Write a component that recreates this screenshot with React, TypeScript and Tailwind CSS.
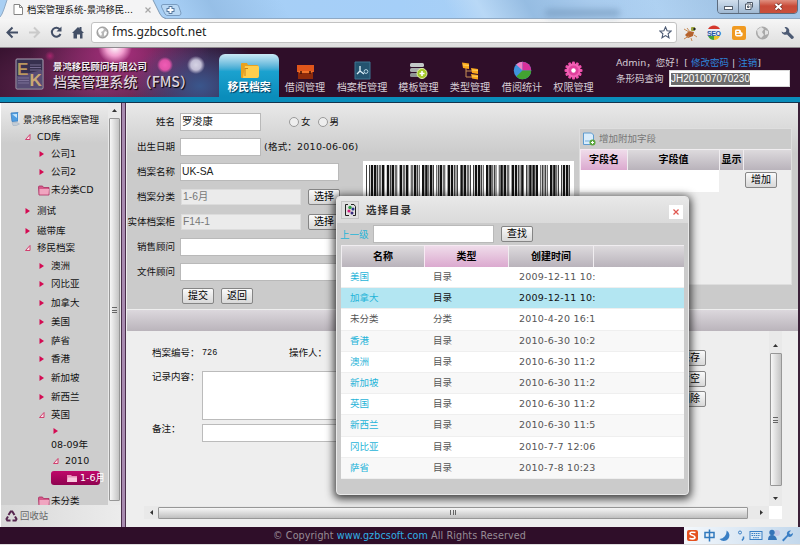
import React from "react";

const CODE39: Record<string, string> = {
  "0": "nnnwwnwnn",
  "1": "wnnwnnnnw",
  "2": "nnwwnnnnw",
  "3": "wnwwnnnnn",
  "7": "nnnwnnwnw",
  J: "nnnnwwwnn",
  H: "wnnnnwwnn",
  "*": "nwnnwnwnn",
};

function Barcode({ value }: { value: string }) {
  const bars: { x: number; w: number }[] = [];
  let x = 0;
  for (const ch of `*${value}*`) {
    CODE39[ch].split("").forEach((k, i) => {
      const w = k === "w" ? 3 : 1;
      if (i % 2 === 0) bars.push({ x, w });
      x += w;
    });
    x += 1;
  }
  return (
    <svg className="block h-[60px] w-[204px]" viewBox={`0 0 ${x - 1} 60`} preserveAspectRatio="none">
      {bars.map((b) => (
        <rect key={b.x} x={b.x} y="0" width={b.w} height="60" fill="#111" />
      ))}
    </svg>
  );
}

function Button({ children, className = "" }: { children: React.ReactNode; className?: string }) {
  return (
    <button
      className={`flex h-[16px] w-[32px] shrink-0 items-center justify-center whitespace-nowrap rounded-[2px] border border-[#858585] bg-linear-to-b from-[#fafafa] to-[#d8d8d8] text-[10px] leading-none text-black ${className}`}
    >
      {children}
    </button>
  );
}

/* ---------- browser chrome ---------- */

function TabStrip() {
  return (
    <div className="relative h-[19px] shrink-0 bg-linear-to-r from-[#a9cff3] via-[#a5cff8] to-[#b4d2ee]">
      <div className="absolute inset-0 bg-[linear-gradient(60deg,transparent_22%,#8fb8e0_27%,transparent_36%,transparent_56%,#c0dcf6_60%,#8db4da_66%,#a6c8ea_74%,transparent_82%,#9bbfe2_90%)] opacity-70" />
      <div className="absolute left-[545px] top-[9px] h-[8px] w-[75px] rounded bg-[#7397bb] opacity-60 blur-[3px]" />
      <div className="absolute bottom-0 left-0 h-px w-full bg-[#8fa9c4]" />
      <svg className="absolute left-0 top-0" width="184" height="19" viewBox="0 0 184 19">
        <path d="M0 19 L0 17 Q2 15 4 9 L7 0 L153 0 L160 14 Q162 18 166 19 Z" fill="#f4f4f5" />
        <path d="M153 0 L160 14 Q162 18 166 18.5" fill="none" stroke="#7f9ab5" />
        <path d="M0 17 Q2 15 4 9 L7 0" fill="none" stroke="#8fa9c4" />
        <path d="M163 4.5 H176 Q178 4.5 178.600 6 L181 13 Q181 15.500 179 15.500 H168 Q166 15.500 165 14 L161.500 7 Q161 4.500 163 4.500Z" fill="#b9d8f4" stroke="#7a9cc0" />
        <path d="M170.500 6v8M166.500 10h8" stroke="#56789f" strokeWidth="3.800" />
        <path d="M170.500 7v6M167.500 10h6" stroke="#fff" strokeWidth="2" />
        <path d="M14 4.500h5.500l3 3v7H14Z M19.500 4.500v3h3" fill="#fff" stroke="#858585" />
        <path d="M145.500 7.500l5 5M150.500 7.500l-5 5" stroke="#a7a7a7" strokeWidth="1.200" />
      </svg>
      <span className="absolute left-[27px] top-[4px] whitespace-nowrap text-[9.400px] leading-[12px] text-[#111]">
        档案管理系统-景鸿移民...
      </span>
      <div className="absolute right-[2px] top-[-2px] flex h-[16px] w-[81px] overflow-hidden rounded-b-[4px] border border-[#5c6b7d]">
        <div className="flex w-[21px] items-center justify-center border-r border-[#6d7f93] bg-linear-to-b from-[#d5e2ef] to-[#9fb8d2]">
          <div className="mt-[3px] h-[4px] w-[9px] border border-[#56606d] bg-white" />
        </div>
        <div className="flex w-[21px] items-center justify-center border-r border-[#6d7f93] bg-linear-to-b from-[#d5e2ef] to-[#9fb8d2]">
          <svg width="10" height="10" viewBox="0 0 10 10">
            <path d="M3 1.500h5.500v5M1.500 3h5.500v5.500h-5.500ZM3.500 5h1.500v1.500h-1.500Z" fill="#fff" stroke="#4e5a68" />
          </svg>
        </div>
        <div className="flex flex-1 items-center justify-center bg-linear-to-b from-[#e29a8c] via-[#c84a38] to-[#c9503c]">
          <svg width="9" height="9" viewBox="0 0 9 9">
            <path d="M1.500 2l6 5.500M7.500 2l-6 5.500" stroke="#65241d" strokeWidth="3.200" />
            <path d="M1.500 2l6 5.500M7.500 2l-6 5.500" stroke="#fff" strokeWidth="2" />
          </svg>
        </div>
      </div>
    </div>
  );
}

function Toolbar() {
  return (
    <div className="flex h-[29px] shrink-0 items-start border-b border-[#8e8a8e] bg-linear-to-b from-[#f6f6f6] to-[#dedede] pt-[3px]">
      <svg className="shrink-0" width="91" height="21" viewBox="0 0 91 21">
        <path d="M18 10.500H8M12.500 5.500l-5 5 5 5" fill="none" stroke="#434f66" strokeWidth="2" />
        <path d="M29 10.500h9M34 5.500l5 5-5 5" fill="none" stroke="#cacaca" strokeWidth="2" />
        <path d="M60 7.500A4.500 4.500 0 1 0 60.500 12" fill="none" stroke="#434f66" strokeWidth="2" />
        <path d="M61.500 4.500v5h-5Z" fill="#434f66" />
        <path d="M72 11L78 5l1.500 1.500V5h2v3.500L84 11h-1.500v5.500H80v-4h-3v4h-3.500V11Z" fill="#434f66" />
      </svg>
      <div className="flex h-[21px] w-[586px] shrink-0 items-center rounded-[3px] border border-[#c2c2c2] bg-white px-[4px]">
        <svg width="13" height="13" viewBox="0 0 13 13">
          <circle cx="6.500" cy="6.500" r="5.500" fill="#b9b9b9" stroke="#909090" />
          <path d="M3 3l3-1 2 1-1 2-2 1 1 2-1 2-2-2-1-3ZM9 5l2 1-1 3-2 1V7Z" fill="#fff" />
        </svg>
        <span className="ml-[3px] whitespace-nowrap font-['Noto_Sans'] text-[12.100px] leading-none text-[#222]">fms.gzbcsoft.net</span>
        <svg className="ml-auto" width="13" height="13" viewBox="0 0 13 13">
          <path d="M6.500 1l1.600 3.800 4 .300-3 2.700.9 4-3.500-2.200L3 11.800l.9-4-3-2.700 4-.300Z" fill="#fff" stroke="#4c5a73" strokeWidth="1.100" />
        </svg>
      </div>
      <svg className="shrink-0" width="120" height="21" viewBox="677 0 120 21">
        <path d="M685 13l4-4 5 1-1 4-5 2Z" fill="#b5622d" />
        <path d="M684 7l5 3M684 17l5-3M691 16l1 3M687 6l3 4M694 13l3 2" stroke="#c98b55" />
        <path d="M691 7h4M693 5v4" stroke="#9ba43c" strokeWidth="3" />
        <circle cx="694.500" cy="7" r="1.200" fill="#222" />
        <circle cx="714" cy="11" r="7" fill="#e9edf3" />
        <path d="M708 7a7 7 0 0 1 12 0Z" fill="#d5382d" />
        <path d="M708 14a7 7 0 0 0 6 4V14Z" fill="#40a23e" />
        <path d="M714 14h6a7 7 0 0 1-6 4Z" fill="#ebc22c" />
        <text x="707" y="13.500" fontSize="7" fontWeight="bold" fill="#2557a8" fontFamily="Liberation Sans, sans-serif" textLength="14">SEO</text>
        <rect x="732" y="4" width="14" height="14" rx="2" fill="#f09a21" />
        <path d="M736 7.500h3q2 0 2 2 0 1 1 1 .7 0 .7 1v1q0 2-2 2H737q-2 0-2-2v-3q0-2 1-2Z" fill="#fff" />
        <path d="M737 9.700h1.500M737 12.400h3" stroke="#f09a21" strokeWidth="1.200" strokeLinecap="round" />
        <circle cx="762.500" cy="11" r="6.500" fill="#a9a9a9" />
        <path d="M757 8l4-3 3 2-2 3 2 3-3 3-3-3ZM765 8l3 1v3l-3 1Z" fill="#e3e3e3" />
        <path d="M781.500 9.500a4 4 0 0 0 5.500 3l4.500 4.500q1.800.5 2.500-2l-4.800-4.800a4 4 0 0 0-4.700-5l2 2.500-.8 2.200-2.200.6Z" fill="#4c5a73" />
      </svg>
    </div>
  );
}

/* ---------- application header ---------- */

const navIcons: Record<string, React.ReactNode> = {
  folder: (
    <>
      <path d="M1 3q0-1 1-1h5l1 2h9q1 0 1 1v11q0 1-1 1H2q-1 0-1-1Z" fill="#e8a21f" />
      <path d="M5 5h13q1 0 1 1v9q0 2-2 2H3Z" fill="#ffce4d" />
      <path d="M5 7v8M5 7.500h3" stroke="#c98316" fill="none" />
    </>
  ),
  case: (
    <>
      <path d="M1 4h17v7H1Z" fill="#e0561b" />
      <path d="M2 10h15v8H2Z" fill="#8d2a0b" />
      <path d="M1 10h17l-3 2H4Z" fill="#f0742c" />
      <path d="M5 10v3M14 10v3" stroke="#401004" strokeWidth="1.500" />
    </>
  ),
  cabinet: (
    <>
      <path d="M2 1h15v17H2Z" fill="#24536f" stroke="#3c7491" />
      <path d="M7 5v6M7 10l-3 3M7 10l4 3" stroke="#d9edf6" strokeWidth="1.400" fill="none" />
      <circle cx="13" cy="10.500" r="1.900" fill="none" stroke="#b9d6e4" />
    </>
  ),
  server: (
    <>
      <rect x="1" y="2" width="14" height="4" rx="1.500" fill="#c3c8c8" />
      <rect x="1" y="7" width="14" height="4" rx="1.500" fill="#a8adad" />
      <rect x="1" y="12" width="14" height="4" rx="1.500" fill="#8f9494" />
      <circle cx="13" cy="12.500" r="5" fill="#a4c928" stroke="#e0efa6" />
      <path d="M13 10v5M10.500 12.500h5" stroke="#fff" strokeWidth="1.600" />
    </>
  ),
  tree: (
    <>
      <path d="M5 7v9h6M5 10h6" stroke="#c98f54" fill="none" />
      <path d="M1 1.500l7 1v5.500l-6-1Z" fill="#f9a71c" />
      <path d="M10 7l7 1v5l-6-1ZM10 13l7 1v4.500l-6-1Z" fill="#f9a71c" />
      <path d="M2 4l6 .5M11 9l6 .5M11 15l6 .5" stroke="#ffd35f" />
    </>
  ),
  pie: (
    <>
      <circle cx="9.500" cy="9.500" r="8.700" fill="#3f94dd" />
      <path d="M9.500 9.500L3.200 3.500A8.700 8.700 0 0 1 9.500 .8Z" fill="#f080c4" />
      <path d="M9.500 9.500V.8A8.700 8.700 0 0 1 18.200 9.500Z" fill="#d9309a" />
      <path d="M9.500 9.500H18.200A8.700 8.700 0 0 1 3.300 15.600Z" fill="#42a332" />
    </>
  ),
  gear: (
    <>
      {[0, 30, 60, 90, 120, 150].map((a) => (
        <rect key={a} x="8" y="0.500" width="3" height="18" rx="1" fill="#ef4fab" transform={`rotate(${a} 9.500 9.500)`} />
      ))}
      <circle cx="9.500" cy="9.500" r="7" fill="#f264b6" />
      <circle cx="9.500" cy="9.500" r="5" fill="#e0409d" />
      <circle cx="9.500" cy="9.500" r="2.200" fill="#fff" />
    </>
  ),
};

const nav = [
  { label: "移民档案", icon: "folder", width: "w-[60px]", active: true },
  { label: "借阅管理", icon: "case", width: "w-[52px]" },
  { label: "档案柜管理", icon: "cabinet", width: "w-[62px]" },
  { label: "模板管理", icon: "server", width: "w-[51px]" },
  { label: "类型管理", icon: "tree", width: "w-[52px]" },
  { label: "借阅统计", icon: "pie", width: "w-[52px]" },
  { label: "权限管理", icon: "gear", width: "w-[51px]" },
];

function Header() {
  return (
    <header className="flex h-[49px] shrink-0 bg-[#2f0e29] bg-[radial-gradient(circle_at_115px_-1px,#fff_0,#f29fd0_9px,transparent_17px),radial-gradient(circle_at_165px_17px,#f05db5_0,#e052a8_5px,transparent_8px),radial-gradient(circle_at_196px_17px,#d5d3e4_0,#c3bfd6_5px,transparent_9px),radial-gradient(circle_at_50px_8px,#a8256d_0,transparent_5px),radial-gradient(ellipse_70px_50px_at_200px_38px,#3a568c_0,transparent_100%),radial-gradient(ellipse_90px_50px_at_120px_5px,#a72f7c_0,transparent_100%),radial-gradient(ellipse_150px_70px_at_100px_40px,#73305f_0,transparent_100%)]">
      <div className="flex w-[219px] shrink-0 pl-[15px] pt-[10px]">
        <svg className="shrink-0" width="30" height="33" viewBox="0 0 30 33">
          <rect x="1" y="1" width="27" height="30" rx="1" fill="#37304f" stroke="#aaa3b5" />
          <path d="M2 18L27 12V30H2Z" fill="#574c74" />
          <path d="M3 20h11M3 22.500h11M3 25h11M15 7h11M15 9.500h11M15 12h11" stroke="#8478a0" strokeWidth=".8" />
          <text x="2" y="16.500" fontSize="17" fontWeight="bold" fill="#b9965f" fontFamily="Liberation Sans, sans-serif">E</text>
          <text x="14.500" y="28" fontSize="17" fontWeight="bold" fill="#c9a873" fontFamily="Liberation Sans, sans-serif">K</text>
        </svg>
        <div className="whitespace-nowrap pl-[8px] pt-[3px] text-[#f5eef4] [text-shadow:1px_1px_1px_#000]">
          <div className="text-[9.400px] font-bold leading-[11px]">景鸿移民顾问有限公司</div>
          <div className="font-['Noto_Sans_CJK_SC'] text-[14.100px] font-medium leading-[18px] text-[#ddd2dc]">
            档案管理系统（FMS）
          </div>
        </div>
      </div>
      <nav className="flex shrink-0 pt-[6px]">
        {nav.map((n) => (
          <div
            key={n.label}
            className={`flex shrink-0 flex-col items-center pt-[7px] ${n.width} ${
              n.active ? "rounded-t-[6px] bg-linear-to-b from-[#c8e9f5] via-[#1ba2cf] via-40% to-[#0a8dbb] font-bold text-white [text-shadow:1px_1px_1px_#035]" : "text-[#d8cfd6]"
            }`}
          >
            <svg width="19" height="19" viewBox="0 0 19 19">{navIcons[n.icon]}</svg>
            <span className={`mt-[2px] whitespace-nowrap leading-[12px] ${n.active ? "text-[10.800px]" : "text-[10.100px]"}`}>{n.label}</span>
          </div>
        ))}
      </nav>
      <div className="pl-[17px] pt-[7px] text-[9.500px] text-[#d5ccd4]">
        <div className="whitespace-nowrap leading-[15px]">
          Admin，您好！[ <a className="text-[#2e86dc]">修改密码</a> | <a className="text-[#2e86dc]">注销</a>]
        </div>
        <div className="flex items-center">
          <span className="w-[53px] whitespace-nowrap">条形码查询</span>
          <div className="flex h-[17px] w-[121px] items-center border border-[#d9d9d9] bg-white pl-[1px]">
            <span className="bg-[#6c6c6c] font-['Liberation_Sans'] text-[10px] leading-[12px] text-white">JH201007070230</span>
          </div>
        </div>
      </div>
    </header>
  );
}

/* ---------- sidebar ---------- */

type Node = { label: string; icon: "pc" | "open" | "closed" | "folder" | "none" | "sel"; pad: string; h: string };

const tree: Node[] = [
  { label: "景鸿移民档案管理", icon: "pc", pad: "pl-[8px]", h: "h-[19px]" },
  { label: "CD库", icon: "open", pad: "pl-[23px]", h: "h-[15px]" },
  { label: "公司1", icon: "closed", pad: "pl-[37px]", h: "h-[19px]" },
  { label: "公司2", icon: "closed", pad: "pl-[37px]", h: "h-[18px]" },
  { label: "未分类CD", icon: "folder", pad: "pl-[37px]", h: "h-[18px]" },
  { label: "测试", icon: "closed", pad: "pl-[23px]", h: "h-[24px]" },
  { label: "磁带库", icon: "closed", pad: "pl-[23px]", h: "h-[15px]" },
  { label: "移民档案", icon: "open", pad: "pl-[23px]", h: "h-[20px]" },
  { label: "澳洲", icon: "closed", pad: "pl-[37px]", h: "h-[15px]" },
  { label: "冈比亚", icon: "closed", pad: "pl-[37px]", h: "h-[22px]" },
  { label: "加拿大", icon: "closed", pad: "pl-[37px]", h: "h-[16px]" },
  { label: "美国", icon: "closed", pad: "pl-[37px]", h: "h-[21px]" },
  { label: "萨省", icon: "closed", pad: "pl-[37px]", h: "h-[17px]" },
  { label: "香港", icon: "closed", pad: "pl-[37px]", h: "h-[20px]" },
  { label: "新加坡", icon: "closed", pad: "pl-[37px]", h: "h-[18px]" },
  { label: "新西兰", icon: "closed", pad: "pl-[37px]", h: "h-[19px]" },
  { label: "英国", icon: "open", pad: "pl-[37px]", h: "h-[18px]" },
  { label: "", icon: "closed", pad: "pl-[51px]", h: "h-[14px]" },
  { label: "08-09年", icon: "none", pad: "pl-[50px]", h: "h-[13px]" },
  { label: "2010", icon: "open", pad: "pl-[51px]", h: "h-[20px]" },
  { label: "1-6月", icon: "sel", pad: "pl-[50px]", h: "h-[14px]" },
  { label: "未分类", icon: "folder", pad: "pl-[37px]", h: "h-[32px]" },
];

function FolderIcon() {
  return (
    <svg className="shrink-0" width="12" height="11" viewBox="0 0 12 11">
      <path d="M.5 2q0-1 1-1h3l1 1.500h5.500v7.500H1Z" fill="#d65a8a" stroke="#a92c5f" strokeWidth=".8" />
      <path d="M1.500 4h9.500l-.500 5.500H1.500Z" fill="#f0a5c0" />
    </svg>
  );
}

function TreeRow({ label, icon, pad, h }: Node) {
  if (icon === "sel") {
    return (
      <div className={`flex shrink-0 ${h} ${pad}`}>
        <div className="flex h-full w-[49px] items-center whitespace-nowrap rounded-[3px] bg-linear-to-b from-[#c0086a] to-[#8f0350] pl-[16px] text-white">
          <svg className="mr-[3px] shrink-0" width="10" height="8" viewBox="0 0 10 8">
            <path d="M0 1h4l1 1h5v6H0Z" fill="#e98fb8" />
            <path d="M1 3.500h9V8H0Z" fill="#f7c6dc" />
          </svg>
          {label}
        </div>
      </div>
    );
  }
  return (
    <div className={`flex shrink-0 items-center whitespace-nowrap ${h} ${pad}`}>
      {icon === "pc" && (
        <svg className="mr-[2px] mt-[-2px] shrink-0" width="12" height="14" viewBox="0 0 12 14">
          <path d="M2 1l7-.500V9L3 9.500Z" fill="#4f9ee2" stroke="#3d7fbf" strokeWidth=".8" />
          <path d="M3.200 2.300l4.800-.400v4Z" fill="#c6e6fb" />
          <path d="M3 10.500h5l2.500 1.500-3 1.500H4Z" fill="#c2ccd6" stroke="#8fa2b5" strokeWidth=".4" />
          <path d="M9 1h1.500v8.500H9Z" fill="#dfe6ec" />
        </svg>
      )}
      {icon === "closed" && (
        <svg className="mr-[7px] shrink-0" width="6" height="8" viewBox="0 0 6 8">
          <path d="M1.500 1L6 4 1.500 7Z" fill="#d40a52" />
        </svg>
      )}
      {icon === "open" && (
        <svg className="mr-[6px] shrink-0" width="7" height="8" viewBox="0 0 7 8">
          <path d="M6 1.500v5H1.500Z" fill="#f6dfe6" stroke="#cf2f63" strokeWidth=".9" />
        </svg>
      )}
      {icon === "folder" && <FolderIcon />}
      <span className={icon === "folder" ? "ml-[1px]" : ""}>{label}</span>
    </div>
  );
}

function Arrow({ d }: { d: string }) {
  return (
    <svg width="7" height="7" viewBox="0 0 7 7">
      <path d={d} fill="#333" />
    </svg>
  );
}

function Sidebar() {
  return (
    <aside className="flex w-[121px] shrink-0 flex-col border-l border-white">
      <div className="flex h-[402px] shrink-0 bg-linear-to-b from-[#ececec] via-[#cdcdcd] via-10% to-[#cdcdcd]">
        <div className="flex w-[107px] flex-col overflow-hidden pt-[7px] text-[9.500px] leading-[12px] text-[#111]">
          {tree.map((n, i) => (
            <TreeRow key={i} {...n} />
          ))}
        </div>
        <div className="flex w-[13px] flex-col items-center bg-[#e9e9e9]">
          <div className="flex h-[15px] items-center">
            <Arrow d="M3.500 2L6 5H1Z" />
          </div>
          <div className="flex h-[383px] w-[11px] shrink-0 items-center justify-center rounded-[1px] border border-[#979797] bg-linear-to-r from-[#f7f7f7] to-[#c4c4c4]">
            <div className="h-[6px] w-[5px] bg-[repeating-linear-gradient(to_bottom,#666_0_1px,transparent_1px_2.500px)]" />
          </div>
        </div>
      </div>
      <div className="flex flex-1 items-center bg-linear-to-r from-[#d8d8d8] to-[#ececec] pl-[4px] text-[9.400px] text-[#666]">
        <svg className="mr-[2px]" width="13" height="12" viewBox="0 0 13 12">
          <path d="M3.500 5l2.200-3.500h1.600l2.200 3.500M10 6.500l1.500 2.500-.800 1.500H7.500M5.500 10.500H2.300L1.500 9 3 6.500" fill="none" stroke="#56264f" strokeWidth="2" />
        </svg>
        回收站
      </div>
    </aside>
  );
}

/* ---------- form ---------- */

function Field({ label, children }: { label: string; children: React.ReactNode }) {
  return (
    <div className="flex h-[25px] items-center">
      <span className="w-[48px] shrink-0 whitespace-nowrap text-right">{label}</span>
      {children}
    </div>
  );
}

const inputFont = "font-['Liberation_Sans','Noto_Sans_CJK_SC',sans-serif] text-[10.300px] leading-[14px]";

function Input({ className = "", children }: { className?: string; children?: React.ReactNode }) {
  return (
    <div className={`ml-[5px] flex h-[18px] shrink-0 items-center border border-[#b9b9b9] bg-white pl-[1px] pt-[1px] text-[#222] ${inputFont} ${className}`}>
      {children}
    </div>
  );
}

function LockedInput({ children }: { children: React.ReactNode }) {
  return (
    <div className={`ml-[6px] flex h-[16px] w-[120px] shrink-0 items-center border border-[#dcdcdc] bg-[#ebebeb] pl-[1px] pt-[1px] text-[#777] ${inputFont}`}>
      {children}
    </div>
  );
}

function RecordForm() {
  return (
    <div className="w-[236px] shrink-0 pt-[6px] text-[#111]">
      <Field label="姓名">
        <Input className="w-[81px]">罗浚康</Input>
        <span className="ml-[28px] size-[10px] rounded-full border border-[#999] bg-[#eee]" />
        <span className="ml-[2px]">女</span>
        <span className="ml-[7px] size-[10px] rounded-full border border-[#999] bg-[#eee]" />
        <span className="ml-[2px]">男</span>
      </Field>
      <Field label="出生日期">
        <Input className="w-[81px]" />
        <span className="ml-[3px] whitespace-nowrap tracking-[.22px]">(格式：2010-06-06)</span>
      </Field>
      <Field label="档案名称">
        <Input className="w-[159px]">UK-SA</Input>
      </Field>
      <Field label="档案分类">
        <LockedInput>1-6月</LockedInput>
        <Button className="ml-[7px]">选择</Button>
      </Field>
      <Field label="实体档案柜">
        <LockedInput>F14-1</LockedInput>
        <Button className="ml-[7px]">选择</Button>
      </Field>
      <Field label="销售顾问">
        <Input className="w-[159px]" />
      </Field>
      <Field label="文件顾问">
        <Input className="w-[159px]" />
      </Field>
      <div className="flex h-[24px] items-center gap-[7px] pl-[55px]">
        <Button>提交</Button>
        <Button>返回</Button>
      </div>
    </div>
  );
}

const headCell = "flex items-center justify-center border-l border-t border-[#f0edf0] bg-linear-to-b from-[#dddadd] to-[#b9b3bb] font-bold text-black";
const headPink = "flex items-center justify-center border-l border-t border-[#f7e9f3] bg-linear-to-b from-[#efdcea] to-[#dba9cf] font-bold text-black";

function ExtraFields() {
  return (
    <div className="mt-[25px] h-[157px] w-[213px] shrink-0 border border-[#dedede] bg-[#eee]">
      <div className="flex h-[20px] items-center bg-[#cbcbcb] pl-[2px] text-[#777]">
        <svg className="mr-[3px]" width="14" height="14" viewBox="0 0 14 14">
          <path d="M1.500 1h8l2 2v9.500h-10Z" fill="#d9ecfb" stroke="#5e9bd0" />
          <path d="M3 9h7" stroke="#a7cdec" strokeWidth="2" />
          <circle cx="10.500" cy="10.500" r="3" fill="#5aa53c" />
          <path d="M10.500 9v3M9 10.500h3" stroke="#fff" />
        </svg>
        增加附加字段
      </div>
      <div className="flex h-[21px] text-[10px]">
        <div className={`w-[47px] ${headPink}`}>字段名</div>
        <div className={`w-[92px] ${headCell}`}>字段值</div>
        <div className={`w-[24px] whitespace-nowrap ${headCell}`}>显示</div>
        <div className={`flex-1 ${headCell}`} />
      </div>
      <div className="flex">
        <div className="h-[22px] w-[139px] bg-white" />
        <Button className="ml-[26px] mt-[2px]">增加</Button>
      </div>
    </div>
  );
}

function Lower() {
  return (
    <section className="flex flex-1 flex-col bg-[#eee] text-[#111]">
      <div className="flex h-[175px]">
        <div className="w-[509px] shrink-0 pl-[25px] pt-[13px]">
          <div className="flex h-[18px] items-center">
            <span className="w-[50px] whitespace-nowrap">档案编号：</span>
            <span className="w-[87px] font-['Liberation_Mono'] text-[8.500px]">726</span>
            <span>操作人：</span>
          </div>
          <div className="mt-[9px] flex">
            <span className="w-[50px] whitespace-nowrap">记录内容：</span>
            <div className="h-[49px] w-[400px] border border-[#bbb] bg-white" />
          </div>
          <div className="mt-[4px] flex">
            <span className="-mt-[1px] w-[50px] whitespace-nowrap">备注：</span>
            <div className="h-[18px] w-[400px] border border-[#bbb] bg-white" />
          </div>
        </div>
        <div className="flex flex-col gap-[4.500px] pl-[38px] pt-[19px]">
          <Button>保存</Button>
          <Button>清空</Button>
          <Button>删除</Button>
        </div>
        <div className="ml-auto mr-[16px] flex w-[13px] flex-col items-center bg-[#e9e9e9] pt-[7px]">
          <div className="flex h-[15px] items-center">
            <Arrow d="M3.500 2L6 5H1Z" />
          </div>
          <div className="flex h-[133px] w-[12px] items-center justify-center rounded-[1px] border border-[#979797] bg-linear-to-r from-[#f7f7f7] to-[#c4c4c4]">
            <div className="h-[6px] w-[5px] bg-[repeating-linear-gradient(to_bottom,#666_0_1px,transparent_1px_2.500px)]" />
          </div>
          <div className="mt-[5px] flex h-[15px] items-center">
            <Arrow d="M3.500 5L6 2H1Z" />
          </div>
        </div>
      </div>
      <div className="ml-[17px] flex h-[13px] w-[638px] items-center bg-[#e9e9e9]">
        <div className="flex w-[14px] justify-center">
          <Arrow d="M5 1v5L2 3.500Z" />
        </div>
        <div className="flex h-[12px] w-[590px] items-center justify-center rounded-[1px] border border-[#979797] bg-linear-to-b from-[#f7f7f7] to-[#bfbfbf]">
          <div className="h-[5px] w-[6px] bg-[repeating-linear-gradient(to_right,#666_0_1px,transparent_1px_2.500px)]" />
        </div>
        <div className="flex flex-1 justify-center pl-[6px]">
          <Arrow d="M2 1v5L5 3.500Z" />
        </div>
        <div className="h-[13px] w-[13px] bg-white" />
      </div>
    </section>
  );
}

/* ---------- dialog ---------- */

const rows = [
  ["美国", "目录", "2009-12-11 10:"],
  ["加拿大", "目录", "2009-12-11 10:"],
  ["未分类", "分类", "2010-4-20 16:1"],
  ["香港", "目录", "2010-6-30 10:2"],
  ["澳洲", "目录", "2010-6-30 11:2"],
  ["新加坡", "目录", "2010-6-30 11:2"],
  ["英国", "目录", "2010-6-30 11:2"],
  ["新西兰", "目录", "2010-6-30 11:5"],
  ["冈比亚", "目录", "2010-7-7 12:06"],
  ["萨省", "目录", "2010-7-8 10:23"],
];

function CatalogDialog() {
  return (
    <div className="absolute left-[336px] top-[196px] flex h-[299px] w-[353px] flex-col rounded-[4px] border border-[#e9e9e9] bg-[#cbcbcb] px-[4px] shadow-[0_2px_9px_2px_rgba(0,0,0,.75)]">
      <div className="-mx-[4px] flex h-[26px] shrink-0 items-center rounded-t-[3px] bg-linear-to-b from-[#e8e8e8] to-[#dadada] px-[4px]">
        <div className="flex size-[18px] items-center justify-center border border-[#c4c4c4] bg-[#e0e0e0]">
          <svg width="13" height="14" viewBox="0 0 13 14">
            <path d="M4 1.500H1.500v11H5M7 1.500h3l1.500 2V12.500H9" fill="none" stroke="#222" />
            <circle cx="6" cy="4.500" r="1.700" fill="#2f9c44" />
            <circle cx="9" cy="6" r="1.500" fill="#27358c" />
            <circle cx="5" cy="8" r="1.600" fill="#d01f7b" />
            <circle cx="8" cy="10" r="1.500" fill="#3a2a7e" />
          </svg>
        </div>
        <span className="ml-[7px] text-[10.500px] font-bold tracking-[1px] text-[#333]">选择目录</span>
        <div className="ml-auto mr-[1px] mt-[3px] flex size-[14px] items-center justify-center bg-white">
          <svg width="6" height="6" viewBox="0 0 6 6">
            <path d="M.5.5l5 5M5.500.5l-5 5" stroke="#e0564f" strokeWidth="1.200" />
          </svg>
        </div>
      </div>
      <div className="flex h-[22px] shrink-0 items-center">
        <a className="-ml-[1px] mt-[2px] w-[28px] whitespace-nowrap text-[#1fb4d8]">上一级</a>
        <Input className="w-[121px]" />
        <Button className="ml-[7px]">查找</Button>
      </div>
      <div className="flex h-[22px] shrink-0 text-[10px]">
        <div className={`w-[83px] ${headCell}`}>名称</div>
        <div className={`w-[84px] ${headPink}`}>类型</div>
        <div className={`w-[85px] ${headCell}`}>创建时间</div>
        <div className={`flex-1 ${headCell}`} />
      </div>
      {rows.map(([name, type, time], i) => (
        <div
          key={i}
          className={`flex h-[21.200px] shrink-0 items-center border-b border-[#efefef] ${
            i === 1 ? "bg-[#b3e6f2] text-[#111]" : i % 2 ? "bg-[#f8f8f8] text-[#555]" : "bg-white text-[#555]"
          }`}
        >
          <span className={`w-[83px] shrink-0 pl-[9px] ${i === 2 ? "" : "text-[#1fb4d8]"}`}>{name}</span>
          <span className="w-[84px] shrink-0 pl-[9px]">{type}</span>
          <span className="w-[90px] shrink-0 whitespace-nowrap pl-[11px] tracking-[.22px]">{time}</span>
        </div>
      ))}
    </div>
  );
}

function Footer() {
  return (
    <footer className="flex h-[18px] shrink-0 items-start border-b border-[#ddd] bg-[#2f0e29]">
      <p className="w-[684px] whitespace-nowrap pl-[273px] text-[9.600px] leading-[17px] tracking-[.1px] text-[#978c95]">
        © Copyright <a className="text-[#2fb0e6]">www.gzbcsoft.com</a> All Rights Reserved
      </p>
      <svg className="h-[17px] w-[116px] shrink-0 bg-linear-to-r from-[#f4f8fc] to-[#c3d8ec]" viewBox="0 0 116 17">
        <rect x="3" y="3" width="11" height="11" rx="2" fill="#e4511f" />
        <path d="M11.500 5.500Q6 4.500 6 6.800C6 8.500 11 8 11 10.200 11 12.500 7 12 5.500 11.200" fill="none" stroke="#fff" strokeWidth="1.600" />
        <path d="M21 5.500h9v5h-9ZM25.500 2.500v12" fill="none" stroke="#3079bd" strokeWidth="1.500" />
        <path d="M42.500 3.500A5.600 5.600 0 1 1 35.500 12A7.500 7.500 0 0 0 42.500 3.500Z" fill="#3a7fc4" />
        <circle cx="56" cy="5.500" r="1.500" fill="none" stroke="#3a7fc4" />
        <path d="M59.500 9.500v2l-1.500 2" fill="none" stroke="#3a7fc4" strokeWidth="1.500" />
        <rect x="66" y="4.500" width="12" height="8" fill="#dceaf6" stroke="#3a7fc4" />
        <path d="M67.500 6.500h9M67.500 8.500h9M69 10.700h6" stroke="#3a7fc4" strokeDasharray="1.500 .7" />
        <circle cx="93" cy="6" r="3" fill="#c3c6e6" />
        <circle cx="88" cy="5.500" r="2.700" fill="#3673b8" />
        <path d="M84 13q0-5 4-5t5 5Z" fill="#3673b8" />
        <path d="M98 13l5-5a3.500 3.500 0 0 1 4-4.500L105 6l1.500 1.500L109 6a3.500 3.500 0 0 1-5 3.500l-4.500 5Z" fill="#3a7fc4" />
      </svg>
    </footer>
  );
}

export default function App() {
  return (
    <div className="relative flex h-[545px] w-[800px] flex-col overflow-hidden bg-[#eee] font-['DejaVu_Sans','Noto_Sans_CJK_SC',sans-serif] text-[9.500px] leading-[12px]">
      <TabStrip />
      <Toolbar />
      <Header />
      <div className="h-[6px] shrink-0 border-b border-[#15334c] bg-[#0a8dbb]" />
      <div className="flex h-[424px] shrink-0">
        <Sidebar />
        <div className="w-[5px] shrink-0 border-x border-[#4b2f4c] bg-[#a88bb0]" />
        <main className="ml-[1px] flex flex-1 flex-col border-r-2 border-[#3b2038] bg-linear-to-b from-[#e9e9e9] via-[#cbcbcb] via-12% to-[#cbcbcb]">
          <div className="flex h-[206px] shrink-0">
            <RecordForm />
            <div className="mt-[58px] h-[80px] w-[211px] shrink-0 bg-white pl-[3px] pt-[4px]">
              <Barcode value="JH201007070230" />
            </div>
            <div className="w-[5px] shrink-0" />
            <ExtraFields />
          </div>
          <div className="h-[22px] shrink-0 border-t border-[#eee] bg-linear-to-b from-[#dcd8dd] to-[#bab4bb]" />
          <Lower />
        </main>
      </div>
      <Footer />
      <CatalogDialog />
    </div>
  );
}
